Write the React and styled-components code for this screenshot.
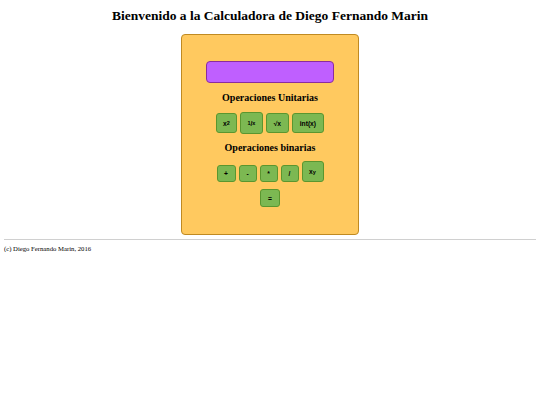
import React from 'react';
import styled, { createGlobalStyle } from 'styled-components';

const GlobalStyle = createGlobalStyle`
  html, body {
    margin: 0;
    padding: 0;
    background: #ffffff;
    font-family: "Liberation Serif", "Times New Roman", serif;
    color: #000000;
  }
`;

const Page = styled.div`
  padding: 0 4px;
`;

const Title = styled.h1`
  margin: 7px 0 9px;
  font-size: 13.5px;
  line-height: 18px;
  font-weight: bold;
  text-align: center;
`;

const Calculator = styled.div`
  width: 176px;
  margin: 0 auto;
  box-sizing: content-box;
  padding: 26px 0 27px;
  background: #ffc95f;
  border: 1.5px solid #c08a22;
  border-radius: 4px;
  display: flex;
  flex-direction: column;
  align-items: center;
`;

const Display = styled.div`
  width: 126px;
  height: 20px;
  background: #bf5fff;
  border: 1px solid #8b2c9e;
  border-radius: 4px;
`;

const SectionTitle = styled.h3`
  margin: ${p => p.$top}px 0 0;
  font-size: 10px;
  line-height: 12px;
  font-weight: bold;
  text-align: center;
`;

const Row = styled.div`
  display: flex;
  justify-content: center;
  align-items: ${p => p.$align || 'center'};
  gap: 3px;
  margin-top: ${p => p.$top}px;
`;

const Key = styled.button`
  box-sizing: border-box;
  height: ${p => p.$h}px;
  min-width: ${p => p.$w || 0}px;
  padding: 0 6px;
  background: #7cb852;
  border: 1.5px solid #5a962f;
  border-radius: 3px;
  font-family: "Liberation Sans", Arial, sans-serif;
  font-size: 6.7px;
  font-weight: bold;
  color: #000000;
  display: flex;
  align-items: center;
  justify-content: center;
  cursor: pointer;

  sup, sub {
    font-size: 5.5px;
    line-height: 0;
  }
`;

const Rule = styled.hr`
  margin: 4px 0 0;
  border: none;
  border-top: 1px solid #d0d0d0;
`;

const Footer = styled.p`
  margin: 5px 0 0;
  font-size: 6.7px;
`;

const App = () => {
  return (
    <Page>
      <GlobalStyle />
      <Title>Bienvenido a la Calculadora de Diego Fernando Marin</Title>
      <Calculator>
        <Display />
        <SectionTitle $top={9}>Operaciones Unitarias</SectionTitle>
        <Row $top={8}>
          <Key $h={20} $w={20}>x<sup>2</sup></Key>
          <Key $h={22} $w={23}><sup>1</sup>/<sub>x</sub></Key>
          <Key $h={20} $w={23}>√x</Key>
          <Key $h={20} $w={32}>int(x)</Key>
        </Row>
        <SectionTitle $top={8}>Operaciones binarias</SectionTitle>
        <Row $top={7} $align="flex-end">
          <Key $h={17} $w={19}>+</Key>
          <Key $h={17} $w={18}>-</Key>
          <Key $h={17} $w={18}>*</Key>
          <Key $h={17} $w={18}>/</Key>
          <Key $h={21} $w={22}>x<sup>y</sup></Key>
        </Row>
        <Row $top={7}>
          <Key $h={18} $w={20}>=</Key>
        </Row>
      </Calculator>
      <Rule />
      <Footer>(c) Diego Fernando Marin, 2016</Footer>
    </Page>
  );
};

export default App;
